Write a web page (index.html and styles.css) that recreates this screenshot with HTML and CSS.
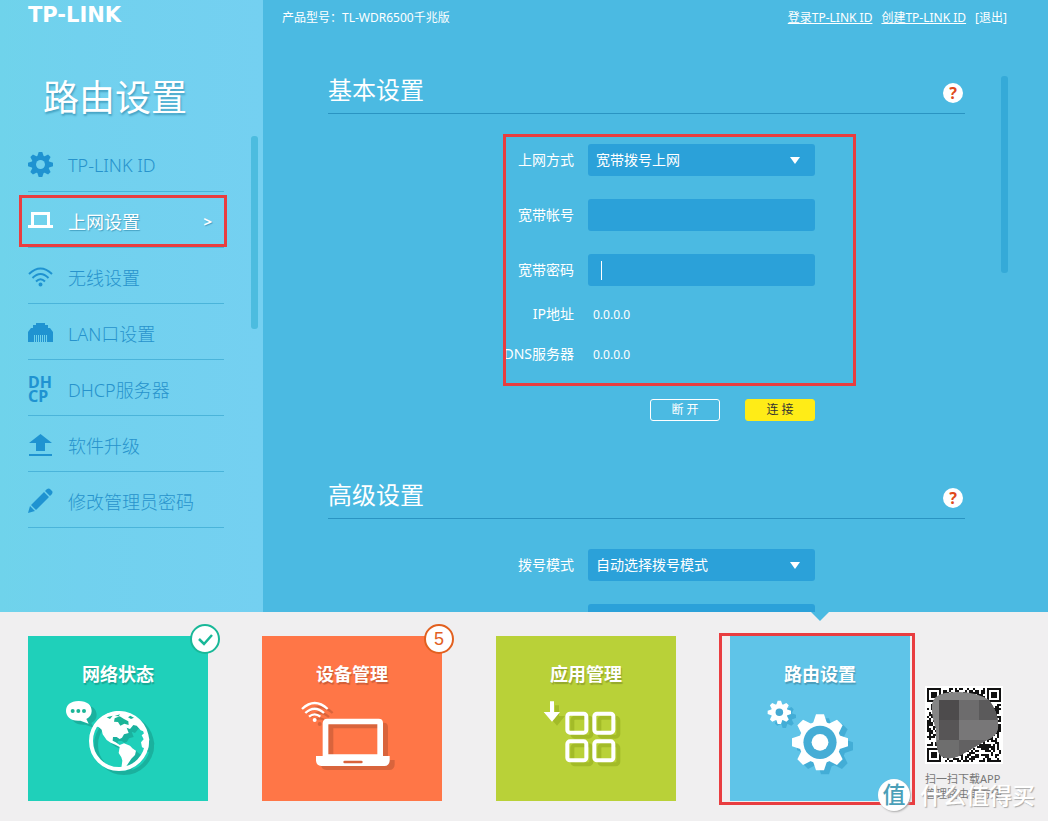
FILE: index.html
```
<!DOCTYPE html>
<html lang="zh-CN">
<head>
    <meta charset="UTF-8">
    <meta name="viewport" content="width=device-width, initial-scale=1.0">
    <title>TP-LINK 路由设置</title>
    <link rel="stylesheet" href="styles.css">
</head>
<body>
    <div class="workspace">
        <aside class="sidebar">
            <div class="logo">TP-LINK</div>
            <h1>路由设置</h1>
            <div class="menu-wrap">
                <nav class="menu">
                    <a href="#id">
                        <svg viewBox="-14 -14 28 28">
                            <g id="teeth">
                                <path id="tooth" d="M-4 -8 L-2 -14 H2 L4 -8 V8 L2 14 H-2 L-4 8Z"/>
                                <use href="#tooth" transform="rotate(45)"/>
                                <use href="#tooth" transform="rotate(90)"/>
                                <use href="#tooth" transform="rotate(135)"/>
                            </g>
                            <circle r="10"/>
                            <circle r="5" fill="#71d1ee"/>
                        </svg>
                        TP-LINK ID
                    </a>
                    <a href="#wan" class="active">
                        <svg viewBox="0 0 25 25"><path d="M3 4 H22 V17 H25 V20 H0 V17 H3Z M6 7 V17 H19 V7Z" fill-rule="evenodd"/></svg>
                        上网设置
                        <span class="more">&gt;</span>
                    </a>
                    <a href="#wifi">
                        <svg viewBox="0 0 25 25" class="line">
                            <path d="M1 10 Q12.500 -1 24 10 M4.500 14 Q12.500 6 20.500 14 M8 17.500 Q12.500 13 17 17.500"/>
                            <circle cx="12.500" cy="20.500" r="1"/>
                        </svg>
                        无线设置
                    </a>
                    <a href="#lan">
                        <svg viewBox="0 0 25 25">
                            <path d="M8 3 H17 V5 H20 V8 H22 L25 12 V22 H20 V15 H5 V22 H0 V12 L3 8 H5 V5 H8Z"/>
                            <path d="M5.500 14 V22 M7.500 14 V22 M9.500 14 V22 M11.500 14 V22 M13.500 14 V22 M15.500 14 V22 M17.500 14 V22 M19.500 14 V22" stroke="#1f93d1"/>
                        </svg>
                        LAN口设置
                    </a>
                    <a href="#dhcp">
                        <span class="dhcp">DH<br>CP</span>
                        DHCP服务器
                    </a>
                    <a href="#upgrade">
                        <svg viewBox="0 0 25 25"><path d="M12.500 2 L24 11 H17 V19 H8 V11 H1Z M1 22 H24 V24 H1Z"/></svg>
                        软件升级
                    </a>
                    <a href="#password">
                        <svg viewBox="0 0 25 25"><path d="M16 4 L21 9 L8 22 L3 17Z M17 3 L19 1 Q21 0 22 1 L24 3 Q25 4 24 6 L22 8Z M2 18 L7 23 L0 25Z"/></svg>
                        修改管理员密码
                    </a>
                </nav>
                <div class="scrollbar"></div>
            </div>
        </aside>

        <main class="main">
            <header class="topbar">
                <span>产品型号：TL-WDR6500千兆版</span>
                <div class="links">
                    <a href="#login">登录TP-LINK ID</a>
                    <a href="#create">创建TP-LINK ID</a>
                    <a href="#logout" class="logout">[退出]</a>
                </div>
            </header>
            <div class="content">
                <div class="settings">
                    <section>
                        <div class="section-head">
                            <h2>基本设置</h2>
                            <button class="help" type="button">?</button>
                        </div>
                        <form class="form marked">
                            <div class="row">
                                <label for="mode">上网方式</label>
                                <div class="select">
                                    <select id="mode"><option>宽带拨号上网</option></select>
                                </div>
                            </div>
                            <div class="row">
                                <label for="account">宽带帐号</label>
                                <input type="text" id="account">
                            </div>
                            <div class="row">
                                <label for="pwd">宽带密码</label>
                                <input type="password" id="pwd" class="caret">
                            </div>
                            <div class="info">
                                <label for="ip">IP地址</label>
                                <output id="ip">0.0.0.0</output>
                                <label for="dns">DNS服务器</label>
                                <output id="dns">0.0.0.0</output>
                            </div>
                            <div class="buttons">
                                <button type="button">断 开</button>
                                <button type="button" class="primary">连 接</button>
                            </div>
                        </form>
                    </section>
                    <section>
                        <div class="section-head">
                            <h2>高级设置</h2>
                            <button class="help" type="button">?</button>
                        </div>
                        <form class="form">
                            <div class="row">
                                <label for="dial">拨号模式</label>
                                <div class="select">
                                    <select id="dial"><option>自动选择拨号模式</option></select>
                                </div>
                            </div>
                            <div class="row">
                                <span></span>
                                <input type="text" aria-label="服务名">
                            </div>
                        </form>
                    </section>
                </div>
                <div class="scrollbar"></div>
            </div>
        </main>
    </div>

    <footer class="dock">
        <nav class="tiles">
            <a href="#status" class="tile green">
                <h3>网络状态</h3>
                <svg viewBox="24 240 540 240">
                    <path d="M176 258 C202 258 215 271 215 288 C215 299 209 307 199 312 L206 326 L181 317 C153 320 138 304 138 288 C138 271 151 258 176 258Z"/>
                    <g fill="#1ab597"><circle cx="158" cy="288" r="6"/><circle cx="175" cy="288" r="6"/><circle cx="192" cy="288" r="6"/></g>
                    <circle cx="297" cy="378" r="84" fill="none" stroke="#fff" stroke-width="12"/>
                    <path d="M224 334 L240 310 L262 296 L290 288 L318 292 L346 310 L366 334 L374 350 L362 346 L350 332 L340 330 L330 342 L320 338 L326 354 L312 358 L306 368 L299 372 L290 366 L279 366 L278 377 L287 382 L299 390 L312 385 L330 392 L337 400 L348 407 L345 420 L334 431 L326 443 L315 459 L304 459 L307 437 L304 427 L296 414 L299 396 L286 389 L272 383 L260 375 L248 358 L245 344 L236 336Z"/>
                    <path d="M378 350 L388 372 L384 404 L366 397 L363 382 L371 373 L365 361Z"/>
                    <path d="M260 307 L278 302 L270 312Z M284 310 L299 304 L312 312 L325 319 L326 330 L313 326 L301 332 L294 321 L282 320Z M284 303 L300 298 L296 304Z M331 302 L342 308 L333 312 L324 307Z" fill="#1ab597"/>
                </svg>
                <span class="badge"><svg viewBox="0 0 26 26"><path d="M7 13 L12 18 L20 9" fill="none" stroke="#19b898" stroke-width="2.500"/></svg></span>
            </a>
            <a href="#devices" class="tile orange">
                <h3>设备管理</h3>
                <svg viewBox="36 240 540 240">
                    <path d="M156 282 Q194 246 233 282 M166 294 Q194 268 222 294 M177 305 Q194 291 211 305" fill="none" stroke="#fff" stroke-width="7"/>
                    <circle cx="194" cy="315" r="6"/>
                    <path d="M232 311 H386 Q399 311 399 324 V423 H419 V437 Q418 452 403 453 H214 Q199 451 198 437 V423 H218 V324 Q219 311 232 311Z M235 328 V418 H382 V328Z" fill-rule="evenodd"/>
                    <rect x="280" y="437" width="58" height="8" rx="4" fill="#d9633c"/>
                </svg>
                <span class="badge">5</span>
            </a>
            <a href="#apps" class="tile lime">
                <h3>应用管理</h3>
                <svg viewBox="48 240 540 240">
                    <path d="M210 259 H222 V291 H240 L216 320 L191 291 H210Z"/>
                    <g fill="none" stroke="#fff" stroke-width="12">
                        <rect x="262" y="296" width="57" height="57" rx="8"/>
                        <rect x="343" y="296" width="57" height="57" rx="8"/>
                        <rect x="262" y="379" width="57" height="57" rx="8"/>
                        <rect x="343" y="379" width="57" height="57" rx="8"/>
                    </g>
                </svg>
            </a>
            <a href="#router" class="tile blue current">
                <h3>路由设置</h3>
                <svg viewBox="90 240 540 240">
                    <g transform="translate(238 292) scale(2.500)"><use href="#teeth"/><circle r="10"/><circle r="4.500" fill="#45a9d2"/></g>
                    <g transform="translate(360 382) scale(6)"><use href="#teeth"/><circle r="10.500"/><circle r="8.300" fill="#45add6"/><circle r="4.200"/></g>
                </svg>
            </a>
        </nav>
        <div class="app">
            <svg class="qr" viewBox="0 0 78 78">
                <rect width="78" height="78" fill="#fff"/>
                <path id="modules" fill="#111" shape-rendering="crispEdges"/>
                <clipPath id="blob"><path d="M7 18 Q9 9 20 7 Q47 3 64 14 Q74 27 73 42 Q72 50 62 54 L36 69 Q24 75 16 70 Q10 64 11 43 Q6 30 7 18Z"/></clipPath>
                <g clip-path="url(#blob)">
                    <rect width="78" height="78" fill="#858585"/>
                    <path d="M14 14 H34 V34 H14Z" fill="#4d4b4c"/>
                    <path d="M34 14 H54 V34 H34Z" fill="#6d6c6d"/>
                    <path d="M54 14 H78 V34 H54Z" fill="#5b5a5b"/>
                    <path d="M14 34 H34 V54 H14Z" fill="#575556"/>
                    <path d="M34 34 H78 V54 H34Z" fill="#787778"/>
                    <path d="M12 54 H34 V76 H12Z" fill="#6e6e6e"/>
                    <path d="M34 54 H78 V76 H34Z" fill="#626162"/>
                </g>
            </svg>
            <p>扫一扫下载APP<br>管理路由更方便</p>
        </div>
        <div class="watermark"><span class="seal">值</span>什么值得买</div>
    </footer>

    <script src="script.js"></script>
</body>
</html>
```
FILE: styles.css
```
*, *::before, *::after {
    box-sizing: border-box;
}

body {
    margin: 0;
    height: 100vh;
    display: flex;
    flex-direction: column;
    font-family: "Noto Sans", "Noto Sans CJK SC", sans-serif;
    font-size: 14px;
    color: #fff;
    background: #f0eff0;
}

h1, h2, h3, p {
    margin: 0;
    font-weight: normal;
}

a {
    color: inherit;
}

button, input, select {
    font: inherit;
    color: inherit;
}

.workspace {
    flex: 1;
    min-height: 0;
    display: flex;
    overflow: hidden;
    background: #4bbae2;
}

/* left menu */
.sidebar {
    width: 263px;
    flex-shrink: 0;
    padding-left: 28px;
    background: linear-gradient(to right, #6fd3eb, #71d1ee 30%, #74d0f1);
}

.logo {
    height: 60px;
    line-height: 30px;
    font-family: "DejaVu Sans", sans-serif;
    font-size: 21px;
    font-weight: bold;
}

h1 {
    height: 76px;
    padding-left: 15px;
    font-size: 36px;
    line-height: 76px;
    text-shadow: 1px 2px 2px rgba(0, 90, 130, 0.4);
}

.menu-wrap {
    display: flex;
    gap: 27px;
}

.menu {
    width: 196px;
}

.menu a {
    position: relative;
    display: flex;
    align-items: center;
    gap: 15px;
    height: 56px;
    padding-top: 2px;
    border-bottom: 1px solid #4ab4da;
    color: #2793cc;
    font-size: 18px;
    font-weight: 300;
    text-decoration: none;
}

.menu svg {
    width: 25px;
    height: 25px;
    fill: #1f93d1;
}

.menu .line {
    fill: none;
    stroke: #1f93d1;
    stroke-width: 2;
}

.menu .active {
    color: #fff;
    font-weight: normal;
    text-shadow: 1px 1px 1px rgba(0, 90, 130, 0.4);
}

.menu .active svg {
    fill: #fff;
}

.menu .active::after {
    content: "";
    position: absolute;
    top: 3px;
    left: -9px;
    right: -3px;
    height: 52px;
    border: 3px solid #e93d40;
}

.more {
    margin-left: auto;
    margin-right: 12px;
    font-size: 15px;
    font-weight: bold;
}

.dhcp {
    width: 25px;
    font-size: 16px;
    font-weight: bold;
    line-height: 14px;
    color: #1f93d1;
}

.scrollbar {
    width: 7px;
    height: 193px;
    border-radius: 3px;
    background: #4cbcdf;
}

/* right part */
.main {
    flex: 1;
    min-width: 0;
}

.topbar {
    display: flex;
    justify-content: space-between;
    height: 62px;
    padding: 0 41px 0 19px;
    font-size: 12px;
    line-height: 35px;
}

.links {
    display: flex;
    gap: 9px;
}

.logout {
    text-decoration: none;
}

.content {
    display: flex;
    gap: 36px;
    padding: 0 40px 0 65px;
}

.content .scrollbar {
    height: 197px;
    margin-top: 14px;
    background: #35aad8;
}

.settings {
    flex: 1;
}

.section-head {
    display: flex;
    justify-content: space-between;
    align-items: center;
    height: 52px;
    padding-right: 2px;
    border-bottom: 1px solid #2a94c2;
}

h2 {
    padding-top: 5px;
    font-size: 24px;
    line-height: 30px;
}

.help {
    width: 20px;
    height: 20px;
    margin-top: 10px;
    padding: 0;
    border: none;
    border-radius: 50%;
    background: #fff;
    color: #df4a1c;
    font-size: 16px;
    font-weight: bold;
    line-height: 20px;
}

.form {
    position: relative;
    padding: 30px 0 46px;
}

.marked::after {
    content: "";
    position: absolute;
    top: 20px;
    left: 175px;
    width: 353px;
    height: 252px;
    border: 3px solid #e93d40;
    pointer-events: none;
}

.row, .info {
    display: grid;
    grid-template-columns: 246px 227px;
    column-gap: 14px;
    align-items: center;
}

.row + .row {
    margin-top: 23px;
}

.row label, .info label {
    padding-bottom: 2px;
    text-align: right;
}

.row input, .row select {
    display: block;
    width: 100%;
    height: 32px;
    padding: 0 8px 2px;
    border: none;
    border-radius: 3px;
    outline: none;
    appearance: none;
    background: #2ba1d9;
}

.row .caret {
    background: linear-gradient(#fff, #fff) 13px 7px / 1px 19px no-repeat #2ba1d9;
}

.select {
    position: relative;
}

.select::after {
    content: "";
    position: absolute;
    top: 13px;
    right: 15px;
    border: 5px solid transparent;
    border-top: 7px solid #fff;
    border-bottom: none;
    pointer-events: none;
}

.info {
    margin-top: 8px;
    grid-auto-rows: 40px;
}

.info output {
    padding-left: 5px;
    font-size: 12px;
}

.buttons {
    display: flex;
    justify-content: flex-end;
    gap: 25px;
    width: 487px;
    margin-top: 25px;
}

.buttons button {
    width: 70px;
    height: 22px;
    padding: 0;
    border: 1px solid #fff;
    border-radius: 3px;
    background: none;
    font-size: 12px;
    line-height: 20px;
}

.buttons .primary {
    border-color: #ffec17;
    background: #ffec17;
    color: #333;
}

/* bottom tiles */
.dock {
    position: relative;
    display: flex;
    gap: 15px;
    padding: 24px 28px 20px;
}

.tiles {
    display: flex;
    gap: 54px;
}

.tile {
    position: relative;
    width: 180px;
    height: 165px;
    padding-top: 26px;
    text-align: center;
    text-decoration: none;
}

.tile h3 {
    font-size: 18px;
    font-weight: bold;
    line-height: 24px;
    text-shadow: 1px 2px 1px rgba(0, 0, 0, 0.2);
}

.tile > svg {
    display: block;
    width: 100%;
    height: 80px;
    margin-top: 9px;
    fill: #fff;
    filter: drop-shadow(5px 4px 0 rgba(0, 0, 0, 0.15));
}

.green {
    background: #1fd0ba;
}

.orange {
    background: #ff7647;
}

.lime {
    background: #b9d138;
}

.blue {
    background: #5fc4e8;
}

.lime > svg {
    filter: drop-shadow(5px 4px 0 #a3bb28);
}

.blue > svg {
    filter: drop-shadow(5px 4px 0 #43add6);
}

.badge {
    position: absolute;
    top: -12px;
    right: -12px;
    width: 30px;
    height: 30px;
    border: 2px solid #19b898;
    border-radius: 50%;
    background: #fff;
}

.badge svg {
    display: block;
}

.orange .badge {
    border-color: #e2601f;
    color: #e2601f;
    font-family: "Liberation Sans", sans-serif;
    font-size: 18px;
    line-height: 26px;
}

.current::before {
    content: "";
    position: absolute;
    top: -24px;
    left: 81px;
    border: 9px solid transparent;
    border-top-color: #4bbae2;
    border-bottom: none;
}

.current::after {
    content: "";
    position: absolute;
    top: -3px;
    left: -11px;
    width: 196px;
    height: 172px;
    border: 3px solid #e93d40;
}

.app {
    padding-top: 50px;
    color: #777;
    font-size: 11px;
    line-height: 15px;
    white-space: nowrap;
}

.qr {
    display: block;
    width: 78px;
    height: 78px;
    margin-bottom: 7px;
}

.watermark {
    position: absolute;
    left: 878px;
    bottom: 10px;
    display: flex;
    align-items: center;
    gap: 10px;
    font-size: 23px;
    font-weight: 500;
    line-height: 32px;
    white-space: nowrap;
    text-shadow: 1px 1px 1px #aaa;
}

.seal {
    width: 32px;
    height: 32px;
    border-radius: 50%;
    background: #fff;
    box-shadow: 1px 1px 2px #aaa;
    color: #4b9fb8;
    line-height: 31px;
    text-align: center;
    text-shadow: none;
}
```
FILE: script.js
```
// draws the QR modules: 37 x 37 cells, 2px each
var size = 37;
var seed = 7;
var d = "";

function finder(x, y) {
    if (x < 0 || y < 0 || x > 6 || y > 6) return false;
    var edge = x === 0 || y === 0 || x === 6 || y === 6;
    var center = x > 1 && x < 5 && y > 1 && y < 5;
    return edge || center;
}

for (var y = 0; y < size; y++) {
    for (var x = 0; x < size; x++) {
        seed = (seed * 16807) % 2147483647;
        var inCorner = (x < 8 && y < 8) || (x > 28 && y < 8) || (x < 8 && y > 28);
        var dark = inCorner
            ? finder(x, y) || finder(x - 30, y) || finder(x, y - 30)
            : seed % 100 < 52;
        if (dark) {
            d += "M" + (x * 2 + 2) + " " + (y * 2 + 2) + "h2v2h-2z";
        }
    }
}
document.getElementById("modules").setAttribute("d", d);
```
